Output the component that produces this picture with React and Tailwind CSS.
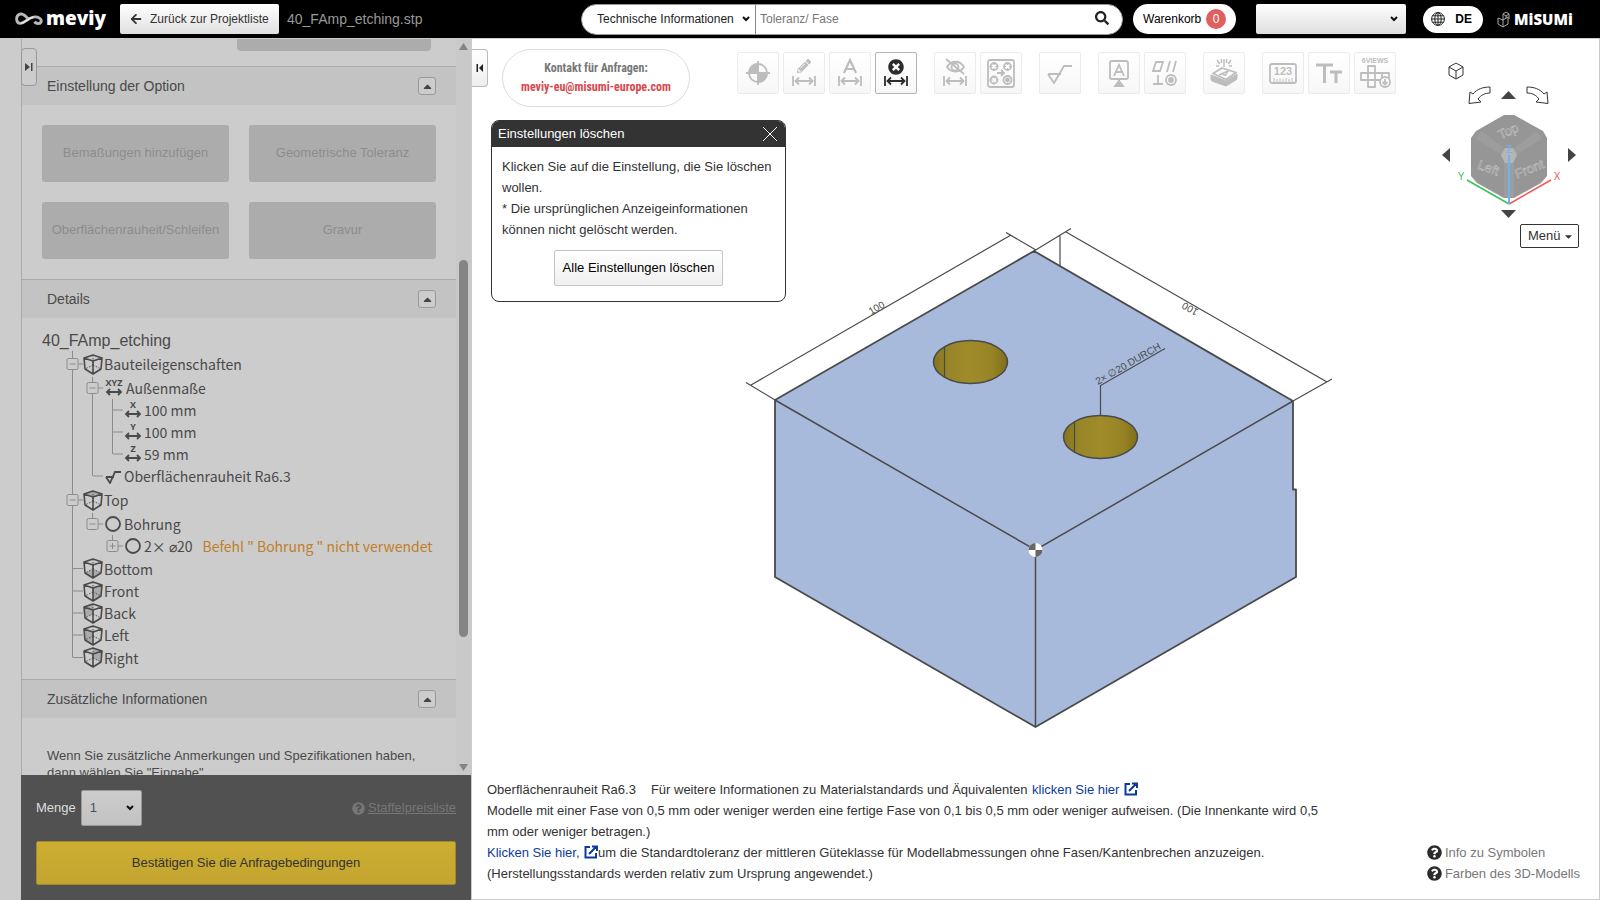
import React from "react";
import {
	FaArrowLeft,
	FaCaretDown,
	FaCaretUp,
	FaPencilAlt,
	FaQuestionCircle,
	FaSearch,
	FaTimesCircle,
} from "react-icons/fa";

const optionButtons = [
	"Bemaßungen hinzufügen",
	"Geometrische Toleranz",
	"Oberflächenrauheit/Schleifen",
	"Gravur",
];

// cells: "line" draws a passing line, "tee" / "end" connect a row to its parent
const treeRows = [
	{ label: "Bauteileigenschaften", icon: "cube", cells: ["tee"], toggle: "minus", size: "lg" },
	{ label: "Außenmaße", icon: "XYZ", cells: ["line", "tee"], toggle: "minus" },
	{ label: "100 mm", icon: "X", cells: ["line", "line", "tee"] },
	{ label: "100 mm", icon: "Y", cells: ["line", "line", "tee"] },
	{ label: "59 mm", icon: "Z", cells: ["line", "line", "end"] },
	{ label: "Oberflächenrauheit Ra6.3", icon: "rough", cells: ["line", "end"] },
	{ label: "Top", icon: "cube", face: "10,1 19,4 10,7 1,4", cells: ["tee"], toggle: "minus", size: "lg" },
	{ label: "Bohrung", icon: "circle", cells: ["line", "end"], toggle: "minus" },
	{
		label: "2× ⌀20",
		icon: "circle",
		cells: ["line", "blank", "end"],
		toggle: "plus",
		note: 'Befehl " Bohrung " nicht verwendet',
	},
	{ label: "Bottom", icon: "cube", face: "10,11 18,15 10,20 2,15", cells: ["tee"], size: "md" },
	{ label: "Front", icon: "cube", face: "10,7 19,4 18,15 10,20", cells: ["tee"] },
	{ label: "Back", icon: "cube", face: "1,4 10,1 10,11 2,15", cells: ["tee"] },
	{ label: "Left", icon: "cube", face: "1,4 10,7 10,20 2,15", cells: ["tee"] },
	{ label: "Right", icon: "cube", face: "10,1 19,4 18,15 10,11", cells: ["end"], size: "md" },
];

const rowHeights = { lg: "h-[26px]", md: "h-[23px]", sm: "h-[22px]" };

const Chevron = ({ className }) => (
	<svg
		viewBox="0 0 8 6"
		className={`absolute top-1/2 -translate-y-1/2 w-2 h-1.5 pointer-events-none ${className}`}
		fill="none"
		stroke="#111"
		strokeWidth="2"
	>
		<path d="M1 1l3 3 3-3" />
	</svg>
);

const TreeCell = ({ kind, toggle, branch }) => (
	<svg className="w-5 h-full shrink-0" stroke="#8c8c8c" fill="none">
		{kind !== "blank" && (
			<line x1="9.5" x2="9.5" y1="0" y2={kind === "end" ? "50%" : "100%"} />
		)}
		{branch && <line x1="10" x2="20" y1="50%" y2="50%" />}
		{toggle && (
			<svg y="50%" overflow="visible">
				<rect x="4" y="-5.5" width="11" height="11" rx="1.5" fill="#ccc" />
				<path d={toggle === "plus" ? "M6.5 0h6M9.5 -3v6" : "M6.5 0h6"} />
			</svg>
		)}
	</svg>
);

const CubeIcon = ({ face }) => (
	<svg
		viewBox="0 0 20 21"
		className="w-5 h-[21px] mr-px shrink-0"
		fill="none"
		stroke="#4a4a4a"
		strokeWidth="1.6"
		strokeLinejoin="round"
	>
		{face && <polygon points={face} fill="#aaa" stroke="none" />}
		<path d="M10 1l9 3-1 11-8 5-8-5L1 4zM1 4l9 3 9-3M10 7v13" />
		<path d="M10 1v10M10 11l-8 4M10 11l8 4" strokeDasharray="1.5 1.5" strokeWidth="1" />
	</svg>
);

const TreeIcon = ({ icon, face }) => {
	if (icon === "cube") return <CubeIcon face={face} />;
	if (icon === "circle")
		return (
			<svg viewBox="0 0 16 16" className="size-4 ml-0.5 mr-[3px] shrink-0">
				<circle cx="8" cy="8" r="7" fill="none" stroke="#4a4a4a" strokeWidth="1.8" />
			</svg>
		);
	if (icon === "rough")
		return (
			<svg viewBox="0 0 16 16" className="size-4 ml-0.5 mr-[3px] shrink-0" fill="none" stroke="#4a4a4a" strokeWidth="1.8">
				<path d="M1 9h8M1 9l4 6L10 4h6" />
			</svg>
		);
	return (
		<svg
			viewBox={icon === "XYZ" ? "-1 0 19 22" : "0 0 16 22"}
			className={`h-[22px] ml-0.5 shrink-0 overflow-visible ${icon === "XYZ" ? "w-[19px] mr-0.5" : "w-4 mr-[3px]"}`}
		>
			<text x="8" y="9" textAnchor="middle" fontSize="9" fontWeight="700" fill="#4a4a4a" fontFamily="Open Sans, sans-serif">
				{icon}
			</text>
			<path d="M1 15h14M4 12l-3 3 3 3M12 12l3 3-3 3" fill="none" stroke="#4a4a4a" strokeWidth="1.8" />
		</svg>
	);
};

const SectionHeader = ({ title }) => (
	<div className="flex items-center justify-between h-[39px] shrink-0 pl-[25px] pr-5 bg-[#c3c3c3] border-t border-[#aaa]">
		<h2 className="text-sm text-[#4a4a4a]">{title}</h2>
		<button
			type="button"
			aria-label={`${title} einklappen`}
			className="flex items-center justify-center size-[18px] rounded-[3px] border border-[#999] bg-[#ccc] text-[#444]"
		>
			<FaCaretUp size={13} />
		</button>
	</div>
);

const Header = () => (
	<header className="flex items-center h-[39px] shrink-0 pr-[29px] bg-black border-b border-[#ccc] text-xs">
		<div className="flex items-center w-[581px] shrink-0 pl-[15px]">
			<svg viewBox="0 0 30 16" className="w-[29px] h-4" fill="none">
				<path
					d="M14 8.500C11 4.500 8 2 5 3c-5 2-4 10 1 9.500 5-.5 7-5.500 13-6.500 5-.8 9 2 8 5-1 2.500-5 2-7 0"
					stroke="#b9b7ba"
					strokeWidth="3"
				/>
				<path d="M6 12.500c5-.5 7-5.500 13-6.500" stroke="#eee" strokeWidth="1.500" />
			</svg>
			<span className="w-[76px] pl-0.5 pb-0.5 font-['Open_Sans',sans-serif] text-[19px] leading-6 font-extrabold text-white">
				meviy
			</span>
			<button
				type="button"
				className="flex items-center gap-2 h-[30px] w-[159px] pl-2.5 rounded-xs bg-linear-to-b from-white to-[#e0e0e0] text-[#333]"
			>
				<FaArrowLeft size={12} />
				Zurück zur Projektliste
			</button>
			<span className="pl-2 text-sm text-[#999]">40_FAmp_etching.stp</span>
		</div>

		<form className="flex items-center grow h-[31px] rounded-full bg-white border border-[#999] overflow-hidden">
			<div className="relative w-[174px] h-full shrink-0">
				<select
					aria-label="Suchbereich"
					className="appearance-none size-full pl-[15px] text-[#222] border-r border-[#888]"
				>
					<option>Technische Informationen</option>
				</select>
				<Chevron className="right-1.5" />
			</div>
			<input
				type="text"
				aria-label="Suche"
				placeholder="Toleranz/ Fase"
				className="grow h-full pl-1 outline-none placeholder:text-[#777]"
			/>
			<button type="button" aria-label="Suchen" className="pr-[13px] pb-0.5 text-[#222]">
				<FaSearch size={14} />
			</button>
		</form>

		<button
			type="button"
			className="flex items-center justify-between w-[103px] h-[30px] ml-2.5 px-2.5 rounded-full bg-white text-black"
		>
			Warenkorb
			<span className="flex items-center justify-center size-5 rounded-full bg-[#e06060] text-white">0</span>
		</button>
		<div className="relative w-[150px] h-[30px] ml-5">
			<select
				aria-label="Konto"
				className="appearance-none size-full rounded-xs bg-linear-to-b from-white to-[#dedede] text-black"
			>
				<option></option>
			</select>
			<Chevron className="right-2" />
		</div>
		<button
			type="button"
			className="flex items-center justify-between w-[60px] h-[27px] ml-[17px] pl-2 pr-[11px] rounded-full bg-white font-bold text-black"
		>
			<svg viewBox="0 0 14 14" className="size-[14px]" fill="none" stroke="#222">
				<circle cx="7" cy="7" r="6.400" />
				<ellipse cx="7" cy="7" rx="3.200" ry="6.400" />
				<path d="M7 .5v13M.5 7h13M1.500 3.800h11M1.500 10.200h11" />
			</svg>
			DE
		</button>
		<a href="#" className="flex items-center gap-[3px] ml-[14px] text-white">
			<svg viewBox="0 0 14 17" className="w-[14px] h-[17px]" fill="none" stroke="#aaa">
				<path d="M1 7l5 2v7l-5-3zM6 9l5-3v7l-5 3M6 3l3-2 3 2v5M6 3v6M9 5l3-2M6 3l3 2v2" />
			</svg>
			<span className="w-[57px] font-['Open_Sans',sans-serif] text-[15px] leading-5 font-extrabold">MiSUMi</span>
		</a>
	</header>
);

const Sidebar = () => (
	<aside className="relative flex w-[472px] shrink-0 pl-[21px] pr-px bg-[#ccc]">
		<button
			type="button"
			aria-label="Seitenleiste ausklappen"
			className="absolute left-[21px] top-[9px] z-10 flex items-center justify-center w-4 h-[38px] rounded border border-[#999] bg-[#ccc]"
		>
			<svg viewBox="0 0 8 8" className="size-2" fill="#444">
				<path d="M0 0l5 4-5 4zM6 0h1.500v8H6z" />
			</svg>
		</button>

		<div className="flex flex-col grow min-w-0">
			<div className="flex grow min-h-0 border-l border-[#aaa]">
				<div className="flex flex-col grow min-w-0 overflow-hidden">
					<button
						type="button"
						aria-label="Option"
						className="w-[194px] h-3 mb-[15px] mr-[25px] shrink-0 self-end rounded-b bg-[#acacac]"
					/>
					<SectionHeader title="Einstellung der Option" />
					<div className="grid grid-cols-2 gap-5 p-5 shrink-0">
						{optionButtons.map((label) => (
							<button
								key={label}
								type="button"
								disabled
								className="h-[57px] pb-0.5 rounded-[3px] bg-[#acacac] text-[13px] text-[#8c8c8c] whitespace-nowrap"
							>
								{label}
							</button>
						))}
					</div>

					<SectionHeader title="Details" />
					<div className="shrink-0 pt-[13px] pb-2.5 pl-5 text-[#4a4a4a]">
						<p className="text-base leading-5">40_FAmp_etching</p>
						<ul className="pl-[21px] font-['Noto_Sans_CJK_JP',sans-serif] text-sm">
							{treeRows.map((row, i) => (
								<li key={i} className={`flex items-center whitespace-nowrap leading-5 ${rowHeights[row.size || "sm"]}`}>
									{row.cells.map((kind, c) => {
										const own = c === row.cells.length - 1;
										return <TreeCell key={c} kind={kind} branch={own} toggle={own && row.toggle} />;
									})}
									<TreeIcon icon={row.icon} face={row.face} />
									<span>{row.label}</span>
									{row.note && <span className="pl-2.5 text-[#c07f2b]">{row.note}</span>}
								</li>
							))}
						</ul>
					</div>

					<SectionHeader title="Zusätzliche Informationen" />
					<p className="pt-[29px] px-[25px] text-[13px] leading-[17px] text-[#4a4a4a]">
						Wenn Sie zusätzliche Anmerkungen und Spezifikationen haben, dann wählen Sie "Eingabe"
					</p>
				</div>

				<div className="flex flex-col items-center w-[15px] shrink-0 py-1 bg-[#c9c9c9]">
					<svg viewBox="0 0 9 7" className="w-[9px] h-[7px]" fill="#848484">
						<path d="M4.500 0L9 7H0z" />
					</svg>
					<div className="grow-[210]" />
					<div className="grow-[377] w-[9px] rounded-full bg-[#848484]" />
					<div className="grow-[127]" />
					<svg viewBox="0 0 9 7" className="w-[9px] h-[7px]" fill="#848484">
						<path d="M0 0h9L4.500 7z" />
					</svg>
				</div>
			</div>

			<div className="shrink-0 px-[15px] py-[15px] bg-[#515151] text-[13px]">
				<div className="flex items-center">
					<label htmlFor="menge" className="text-[#ddd] pr-[5px]">
						Menge
					</label>
					<div className="relative w-[61px] h-9">
						<select
							id="menge"
							className="appearance-none size-full pl-2 rounded-xs border border-[#999] bg-linear-to-b from-[#ccc] to-[#c2c2c2] text-[#4a4f5c]"
						>
							<option>1</option>
						</select>
						<Chevron className="right-2" />
					</div>
					<a href="#" className="flex items-center gap-[3px] ml-auto text-[#767676]">
						<FaQuestionCircle size={13} />
						<span className="underline">Staffelpreisliste</span>
					</a>
				</div>
				<button
					type="button"
					className="w-full h-11 mt-[15px] rounded-xs border border-[#a08a30] bg-linear-to-b from-[#cdae31] to-[#c3a430] text-[#333]"
				>
					Bestätigen Sie die Anfragebedingungen
				</button>
			</div>
		</div>
	</aside>
);

const Dim = () => <path d="M10 24v10M32 24v10M12 29h18M16 25.500L12.500 29l3.500 3.500M26 25.500l3.500 3.500-3.500 3.500" />;

const toolGroups = [
	[
		{
			name: "Ursprung",
			icon: (
				<>
					<circle cx="21" cy="21" r="9" />
					<path d="M21 9v24M9 21h24" />
					<path d="M21 12a9 9 0 0 0-9 9h9zM21 30a9 9 0 0 0 9-9h-9z" fill="currentColor" />
				</>
			),
		},
		{
			name: "Bemaßung bearbeiten",
			icon: (
				<>
					<FaPencilAlt x="14" y="7" size={14} stroke="none" />
					<Dim />
				</>
			),
		},
		{
			name: "Bemaßungstext",
			icon: (
				<>
					<path d="M15 21l6-13 6 13M17 17h8" strokeWidth="2.200" />
					<Dim />
				</>
			),
		},
		{
			name: "Einstellungen löschen",
			active: true,
			icon: (
				<>
					<FaTimesCircle x="13" y="7" size={16} stroke="none" />
					<Dim />
				</>
			),
		},
	],
	[
		{
			name: "Bemaßung ausblenden",
			icon: (
				<>
					<path d="M13 15c4-7 13-7 17 0-4 6-13 6-17 0z" />
					<circle cx="21" cy="15" r="3.500" />
					<path d="M12 7l18 15" />
					<Dim />
				</>
			),
		},
		{
			name: "Gruppieren",
			icon: (
				<>
					<rect x="8" y="8" width="26" height="27" rx="2" />
					<circle cx="14" cy="14.500" r="3.500" />
					<circle cx="27.500" cy="14.500" r="3.500" />
					<circle cx="14" cy="28" r="3.500" />
					<circle cx="27.500" cy="28" r="4" />
					<circle cx="27.500" cy="28" r="1.500" fill="currentColor" />
					<path d="M14 10v3M14 16v3M9.500 14.500h3M15.500 14.500h3M27.500 10v3M27.500 16v3M23 14.500h3M29 14.500h3M14 23.500v3M14 29.500v3M9.500 28h3M15.500 28h3" strokeWidth="1" />
					<path d="M17 21h7M21 18l3 3-3 3" />
				</>
			),
		},
	],
	[{ name: "Rauheit", icon: <path d="M9 22h13M9 22l6 9 10-17h8" /> }],
	[
		{
			name: "Bezug",
			icon: (
				<>
					<rect x="12" y="9" width="18" height="18" rx="2" />
					<path d="M16 24l5-11 5 11M18 20h6M21 27v6" />
					<path d="M17 34l4-5 4 5z" fill="currentColor" />
				</>
			),
		},
		{
			name: "Form und Lage",
			icon: (
				<>
					<path d="M12 10h7l-3 9H9zM26 9l-3 11M32 9l-3 11M14 23v9M9 32h10" />
					<circle cx="27" cy="28" r="5" />
					<circle cx="27" cy="28" r="2" fill="currentColor" />
				</>
			),
		},
	],
	[
		{
			name: "Gravur",
			icon: (
				<>
					<path d="M10 21.500l9-5.500 14 4.500-10 7z" strokeLinejoin="round" />
					<path d="M8 23l15 6v5L10 29.500q-2-1-2-2zM34 22l-11 7v5l10-6q1-1 1-2z" fill="currentColor" strokeWidth="1" />
					<path d="M16 23l9-4-3 5M19 22l3 1" strokeWidth="1.400" />
					<path d="M21 7v8M14 8l3 4M28 8l-3 4M18.500 7v4M23.500 7v4M13 14h3M26 14h3" strokeWidth="1.400" />
				</>
			),
		},
	],
	[
		{
			name: "Messen",
			icon: (
				<>
					<rect x="8" y="12" width="26" height="19" rx="2" />
					<text x="21" y="23" textAnchor="middle" fontSize="11" fontWeight="700" fill="currentColor" stroke="none">
						123
					</text>
					<path d="M12 30v-4M15 30v-3M18 30v-4M21 30v-3M24 30v-4M27 30v-3M30 30v-4" strokeWidth="1" />
				</>
			),
		},
		{ name: "Textgröße", icon: <path d="M8 13h17M16.500 13v18M22 20h12M28 20v11" strokeWidth="3" /> },
		{
			name: "6 Ansichten",
			icon: (
				<>
					<text x="21" y="11" textAnchor="middle" fontSize="7" fontWeight="700" fill="currentColor" stroke="none">
						6VIEWS
					</text>
					<path d="M14 14h7v7h-7zM7 21h28v7H7zM14 21v14h7V21M28 21v7" strokeLinejoin="round" />
					<circle cx="31" cy="30" r="5" fill="#fbfbfb" />
					<path d="M31 27v5M28.500 30l2.500 2.500 2.500-2.500" />
				</>
			),
		},
	],
];

const Toolbar = () => (
	<div className="flex gap-[17px]">
		{toolGroups.map((group, i) => (
			<div key={i} className="flex gap-1">
				{group.map((tool) => (
					<button
						key={tool.name}
						type="button"
						aria-label={tool.name}
						className={`size-[42px] rounded-xs border bg-linear-to-b from-white to-[#f7f7f7] ${
							tool.active ? "border-[#b5b5b5] text-[#2b2b2b]" : "border-[#ececec] text-[#bdbdbd]"
						}`}
					>
						<svg viewBox="1 1 40 40" className="size-10" fill="none" stroke="currentColor" strokeWidth="1.800">
							{tool.icon}
						</svg>
					</button>
				))}
			</div>
		))}
	</div>
);

const DeleteDialog = () => (
	<div
		role="dialog"
		aria-label="Einstellungen löschen"
		className="absolute left-[19px] top-[81px] w-[295px] rounded-lg border border-[#333] bg-white text-[13px] overflow-hidden"
	>
		<div className="flex items-center justify-between h-[26px] pl-1.5 pr-[7px] bg-[#333] text-white">
			<span>Einstellungen löschen</span>
			<button type="button" aria-label="Schließen">
				<svg viewBox="0 0 16 16" className="size-4" stroke="#fff">
					<path d="M1 1l14 14M15 1L1 15" />
				</svg>
			</button>
		</div>
		<div className="flex flex-col items-center px-2.5 pt-[9px] pb-[15px] text-[#333]">
			<p className="w-full leading-[21px]">
				Klicken Sie auf die Einstellung, die Sie löschen wollen.
				<br />* Die ursprünglichen Anzeigeinformationen können nicht gelöscht werden.
			</p>
			<button
				type="button"
				className="h-9 w-[169px] mt-2.5 rounded-xs border border-[#c4c4c4] bg-linear-to-b from-white to-[#f0f0f0] text-black"
			>
				Alle Einstellungen löschen
			</button>
		</div>
	</div>
);

const ViewCube = () => (
	<div className="absolute right-5 top-[23px] flex flex-col w-[137px]">
		<div className="flex flex-col w-[134px]">
			<button type="button" aria-label="Isometrisch" className="w-4 h-[18px] ml-1.5">
				<svg viewBox="0 0 16 18" fill="none" stroke="#333" strokeLinejoin="round">
					<path d="M8 1l7 4v8l-7 4-7-4V5zM1 5l7 4 7-4M8 9v8" />
				</svg>
			</button>
			<div className="flex items-center justify-center gap-[10px] pt-1.5 pr-0.5">
				<button type="button" aria-label="Nach links drehen" className="w-[23px] h-[18px]">
					<svg viewBox="0 0 23 18" fill="none" stroke="#333">
						<path d="M22 1v6c-5 0-9 2-12 6l3 3-12 1.500L2 6l3 2c4-5 10-7 17-7z" />
					</svg>
				</button>
				<button type="button" aria-label="Nach oben" className="w-[15px] h-2">
					<svg viewBox="0 0 15 8" fill="#444">
						<path d="M7.500 0L15 8H0z" />
					</svg>
				</button>
				<button type="button" aria-label="Nach rechts drehen" className="w-[23px] h-[18px]">
					<svg viewBox="0 0 23 18" fill="none" stroke="#333">
						<path d="M1 1v6c5 0 9 2 12 6l-3 3 12 1.500L21 6l-3 2C14 3 8 1 1 1z" />
					</svg>
				</button>
			</div>
			<div className="flex items-center justify-between">
				<button type="button" aria-label="Nach links" className="w-2 h-[14px]">
					<svg viewBox="0 0 8 14" fill="#444">
						<path d="M8 0v14L0 7z" />
					</svg>
				</button>
				<svg viewBox="1455 104 108 102" className="w-[108px] h-[102px]" fontFamily="Liberation Sans, sans-serif">
					<path d="M1504 115h10l29 16 4 7v38l-6 7-27 15h-10l-27-15-6-7v-38l5-7z" fill="#969696" />
					<path d="M1481 131l-5 8 28 17v41h10v-41l28-17-5-8-23 17h-10z" fill="#9d9d9d" />
					<path d="M1505 148h8l4 7-4 8h-8l-4-8z" fill="#b5b5b5" />
					<g fontSize="13" fill="#8a8a8a" stroke="#c9c9c9" strokeWidth="0.500" textAnchor="middle">
						<text transform="translate(1510 135) rotate(-25)">Top</text>
						<text transform="translate(1487 172) rotate(20)">Left</text>
						<text transform="translate(1531 173) rotate(-22)">Front</text>
					</g>
					<g fill="none" strokeWidth="1.500">
						<path d="M1509 204l-42-24" stroke="#35c455" />
						<path d="M1509 204l42-24" stroke="#f4555a" />
						<path d="M1509 204v-49" stroke="#6fb3f5" strokeWidth="2" />
					</g>
					<g fontSize="10" textAnchor="middle">
						<text x="1461" y="180" fill="#35c455">Y</text>
						<text x="1557" y="180" fill="#f4555a">X</text>
						<text x="1509" y="153" fill="#6fb3f5">Z</text>
					</g>
				</svg>
				<button type="button" aria-label="Nach rechts" className="w-2 h-[14px]">
					<svg viewBox="0 0 8 14" fill="#444">
						<path d="M0 0v14l8-7z" />
					</svg>
				</button>
			</div>
			<div className="flex justify-center mt-1 pr-0.5">
				<button type="button" aria-label="Nach unten" className="w-[15px] h-2">
					<svg viewBox="0 0 15 8" fill="#444">
						<path d="M0 0h15L7.500 8z" />
					</svg>
				</button>
			</div>
		</div>
		<button
			type="button"
			className="flex items-center justify-between w-[59px] h-6 mt-1.5 pl-[7px] pr-1 self-end rounded-xs border border-[#333] text-[13px] text-[#333]"
		>
			Menü
			<FaCaretDown size={11} />
		</button>
	</div>
);

const Hole = ({ cx, cy }) => (
	<g>
		<ellipse cx={cx} cy={cy} rx="37" ry="21.500" fill="url(#bore)" strokeWidth="1.500" />
		<path d={`M${cx - 26} ${cy - 15}v30`} />
	</g>
);

const PartModel = () => (
	<svg viewBox="740 224 600 510" className="w-[600px] h-[510px] shrink-0" stroke="#4a4a4a" fill="none" strokeWidth="1.200">
		<defs>
			<linearGradient id="bore">
				<stop offset="0" stopColor="#86741f" />
				<stop offset="0.200" stopColor="#988527" />
				<stop offset="0.500" stopColor="#9f8b29" />
				<stop offset="0.800" stopColor="#968325" />
				<stop offset="1" stopColor="#806e1c" />
			</linearGradient>
		</defs>
		<path
			d="M1034 251L1293 401V489.500H1296V577L1035.500 727L775 577V400z"
			fill="#a8badb"
			strokeWidth="1.800"
			strokeLinejoin="round"
		/>
		<path d="M775 400L1035.500 550L1293 401M1035.500 550V727" strokeWidth="1.500" />
		<path d="M751 385L1011 235M746 382.500L775 400M1006 232.500L1036 250" />
		<path d="M1066 232L1327 382M1034 251L1071 228.500M1293 401L1332 379M1060 235v31" />
		<Hole cx={970.5} cy={362} />
		<Hole cx={1100.5} cy={437} />
		<path d="M1100.500 415V385.500L1165 348.500" />
		<g fill="#4a4a4a" stroke="none" fontSize="10" fontFamily="Liberation Sans, sans-serif">
			<text transform="translate(871 315) rotate(-30)">100</text>
			<text transform="translate(1199 310) rotate(210)">100</text>
			<text transform="translate(1098 385) rotate(-30)">2× ∅20 DURCH</text>
		</g>
		<g stroke="none">
			<circle cx="1035.500" cy="550" r="7" fill="#fff" />
			<path d="M1035.500 550v-7a7 7 0 0 0-7 7zM1035.500 550v7a7 7 0 0 0 7-7z" fill="#666" />
		</g>
	</svg>
);

const ExternalIcon = () => (
	<svg viewBox="0 0 14 14" className="inline size-[14px] ml-px align-[-2px]" fill="none" stroke="currentColor" strokeWidth="2">
		<path d="M6 2H1.500v10.500H12V8M5 9l7-7M8 1.500h5V6" />
	</svg>
);

const Viewer = () => (
	<main className="relative flex flex-col grow min-w-0 bg-white border-r border-b border-[#ccc] text-[13px]">
		<button
			type="button"
			aria-label="Seitenleiste einklappen"
			className="absolute left-0 top-2.5 flex items-center justify-center w-4 h-[38px] rounded-r border border-l-0 border-[#bbb] bg-linear-to-b from-white to-[#eee]"
		>
			<svg viewBox="0 0 8 8" className="size-2" fill="#222">
				<path d="M7 0L3 4l4 4zM.5 0H2v8H.5z" />
			</svg>
		</button>

		<div className="flex items-start gap-[47px] pt-2.5 pl-[30px]">
			<div className="flex flex-col items-center justify-center w-[188px] h-[58px] rounded-full border border-[#ddd] font-['Roboto_Condensed','Liberation_Sans',sans-serif] text-xs leading-[19px] font-bold whitespace-nowrap">
				<span className="text-[#777]">Kontakt für Anfragen:</span>
				<a href="#" className="text-[#d8474e]">
					meviy-eu@misumi-europe.com
				</a>
			</div>
			<div className="pt-[3px]">
				<Toolbar />
			</div>
		</div>

		<div className="flex items-end justify-center grow pl-2 pb-[45px]">
			<PartModel />
		</div>

		<div className="flex items-end justify-between pl-[15px] pr-[19px] pb-[15px] leading-[21px] text-[#333]">
			<p className="max-w-[840px]">
				<span className="pr-[15px]">Oberflächenrauheit Ra6.3</span>
				Für weitere Informationen zu Materialstandards und Äquivalenten{" "}
				<a href="#" className="pl-px text-[#0b3a9e]">
					klicken Sie hier <ExternalIcon />
				</a>
				<br />
				Modelle mit einer Fase von 0,5 mm oder weniger werden eine fertige Fase von 0,1 bis 0,5 mm oder weniger
				aufweisen. (Die Innenkante wird 0,5 mm oder weniger betragen.)
				<br />
				<a href="#" className="text-[#0b3a9e]">
					Klicken Sie hier, <ExternalIcon />
				</a>
				um die Standardtoleranz der mittleren Güteklasse für Modellabmessungen ohne Fasen/Kantenbrechen anzuzeigen.
				<br />
				(Herstellungsstandards werden relativ zum Ursprung angewendet.)
			</p>
			<div className="flex flex-col text-[#777]">
				{["Info zu Symbolen", "Farben des 3D-Modells"].map((label) => (
					<a key={label} href="#" className="flex items-center gap-[3px]">
						<FaQuestionCircle size={15} className="text-[#2b2b2b]" />
						{label}
					</a>
				))}
			</div>
		</div>

		<DeleteDialog />
		<ViewCube />
	</main>
);

const App = () => (
	<div className="flex flex-col h-screen overflow-hidden font-['Liberation_Sans',Arial,sans-serif]">
		<Header />
		<div className="flex grow min-h-0">
			<Sidebar />
			<Viewer />
		</div>
	</div>
);

export default App;
